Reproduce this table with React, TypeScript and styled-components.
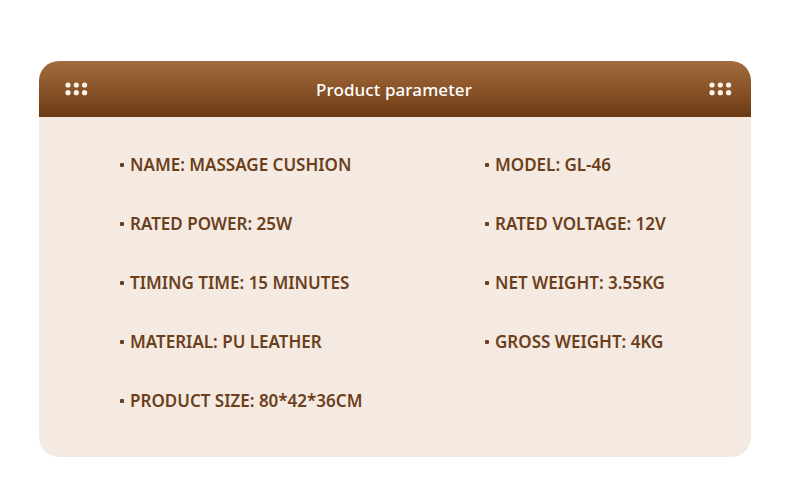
import React from "react";
import styled, { createGlobalStyle } from "styled-components";

const GlobalStyle = createGlobalStyle`
  html, body {
    margin: 0;
    padding: 0;
    background: #ffffff;
  }
  body {
    font-family: "Noto Sans", "Open Sans", sans-serif;
  }
`;

const Page = styled.div`
  width: 790px;
  height: 483px;
  box-sizing: border-box;
  padding: 61px 39px 26px 39px;
`;

const Card = styled.div`
  width: 712px;
  height: 396px;
  border-radius: 20px;
  overflow: hidden;
  background: #f5eae1;
  display: flex;
  flex-direction: column;
`;

const Header = styled.div`
  height: 56px;
  flex: none;
  display: flex;
  align-items: center;
  justify-content: space-between;
  padding: 0 18px 0 26px;
  background: linear-gradient(180deg, #a16c40 0%, #8a5428 50%, #6a3913 100%);
`;

const Title = styled.h2`
  margin: 0 10px 0 0;
  color: #ffffff;
  font-size: 17px;
  font-weight: 500;
  letter-spacing: 0.1px;
`;

const DotGrid = styled.svg`
  width: 24px;
  height: 14px;
  display: block;
`;

const Dots = () => (
  <DotGrid viewBox="0 0 24 14">
    {[0, 1].map((r) =>
      [0, 1, 2].map((c) => (
        <circle key={`${r}-${c}`} cx={3 + c * 8.3} cy={3 + r * 7.7} r={2.6} fill="#fdf5ec" />
      ))
    )}
  </DotGrid>
);

const Body = styled.div`
  flex: 1;
  padding: 18px 0 0 81px;
  display: grid;
  grid-template-columns: 365px 1fr;
  grid-auto-rows: 59px;
  align-content: start;
`;

const Item = styled.div`
  display: flex;
  align-items: center;
  color: #6b3f1c;
  font-size: 17px;
  font-weight: 600;
  white-space: nowrap;
`;

const Bullet = styled.span`
  width: 4px;
  height: 4px;
  border-radius: 1px;
  background: #6b3f1c;
  margin-right: 6px;
  flex: none;
`;

const items: [string, string | null][] = [
  ["NAME: MASSAGE CUSHION", "MODEL: GL-46"],
  ["RATED POWER: 25W", "RATED VOLTAGE: 12V"],
  ["TIMING TIME: 15 MINUTES", "NET WEIGHT: 3.55KG"],
  ["MATERIAL: PU LEATHER", "GROSS WEIGHT: 4KG"],
  ["PRODUCT SIZE: 80*42*36CM", null],
];

export default function App() {
  return (
    <>
      <GlobalStyle />
      <Page>
        <Card>
          <Header>
            <Dots />
            <Title>Product parameter</Title>
            <Dots />
          </Header>
          <Body>
            {items.map(([left, right], i) => (
              <React.Fragment key={i}>
                <Item>
                  <Bullet />
                  {left}
                </Item>
                {right ? (
                  <Item>
                    <Bullet />
                    {right}
                  </Item>
                ) : (
                  <div />
                )}
              </React.Fragment>
            ))}
          </Body>
        </Card>
      </Page>
    </>
  );
}
